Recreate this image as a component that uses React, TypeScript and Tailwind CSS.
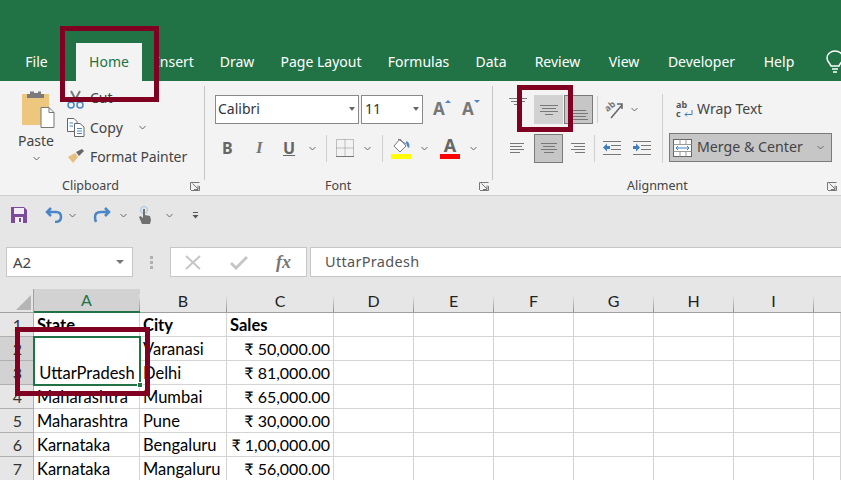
import type { ReactNode } from 'react';

const tabs = [
  { name: 'File', w: 'w-[53px]' },
  { name: 'Home', w: 'w-[66px] ml-[13px]', active: true },
  { name: 'Insert', w: 'w-[65px]' },
  { name: 'Draw', w: 'w-[60px]' },
  { name: 'Page Layout', w: 'w-[108px]' },
  { name: 'Formulas', w: 'w-[87px]' },
  { name: 'Data', w: 'w-[32px] ml-[13px]' },
  { name: 'Review', w: 'w-[101px]' },
  { name: 'View', w: 'w-[32px]' },
  { name: 'Developer', w: 'w-[123px]' },
  { name: 'Help', w: 'w-[32px]' },
];

const rows = [
  { n: 1, a: 'State', b: 'City', c: 'Sales', head: true },
  { n: 2, b: 'Varanasi', c: '₹ 50,000.00' },
  { n: 3, b: 'Delhi', c: '₹ 81,000.00' },
  { n: 4, a: 'Maharashtra', b: 'Mumbai', c: '₹ 65,000.00' },
  { n: 5, a: 'Maharashtra', b: 'Pune', c: '₹ 30,000.00' },
  { n: 6, a: 'Karnataka', b: 'Bengaluru', c: '₹ 1,00,000.00' },
  { n: 7, a: 'Karnataka', b: 'Mangaluru', c: '₹ 56,000.00' },
];

const emptyCols = ['D', 'E', 'F', 'G', 'H', 'I', ''];

function Chevron({ className = '' }: { className?: string }) {
  return (
    <svg width="7" height="5" viewBox="0 0 7 5" className={`shrink-0 ${className}`}>
      <path d="M.5 1 3.500 4 6.500 1" fill="none" stroke="#666" strokeWidth="1" />
    </svg>
  );
}

function Launcher() {
  return (
    <svg width="10" height="9" viewBox="0 0 10 9" className="shrink-0">
      <path d="M.5 8V.5H9.500M2.500 1.500 8 7M8 3.500V7.500H4M1 8.500H9.500V4" fill="none" stroke="#777" strokeWidth="1" />
    </svg>
  );
}

// horizontal text lines used by all the alignment buttons
function Lines({ lines }: { lines: [number, number, number][] }) {
  return (
    <svg width="20" height="18" viewBox="0 0 20 18" className="shrink-0">
      {lines.map(([x1, x2, y]) => (
        <path key={`${x1}-${y}`} d={`M${x1} ${y + 0.5}H${x2}`} stroke="#777" strokeWidth="1" />
      ))}
    </svg>
  );
}

function GroupLabel({ label, className }: { label: string; className: string }) {
  return (
    <div className={`flex h-[16px] items-center ${className}`}>
      <span className="text-[12.5px] text-[#444]">{label}</span>
    </div>
  );
}

function GroupDivider() {
  return <span className="h-[94px] w-px shrink-0 bg-[#c6c6c6]" />;
}

function ClipboardGroup() {
  return (
    <section className="flex w-[204px] shrink-0 flex-col">
      <div className="flex h-[92px]">
        <div className="ml-[18px] flex w-[36px] flex-col items-center">
          <svg width="36" height="40" viewBox="0 0 36 40" className="ml-[1px] mt-[3px] shrink-0">
            <rect x="3" y="5" width="27" height="31" fill="#eec77f" />
            <path d="M11 5V2.500H22V5H25V9H8V5Z" fill="#7a7a7a" />
            <rect x="15" y="1" width="4" height="3" fill="#f3f3f3" />
            <path d="M22 18.500H30L35 23.500V38.500H22Z" fill="#fff" stroke="#777" />
            <path d="M30 18.500V23.500H35" fill="none" stroke="#777" />
          </svg>
          <span className="mt-[2px] text-[14px] leading-[20px] text-[#444]">Paste</span>
          <Chevron className="mt-[5px]" />
        </div>
        <div className="-mt-[2px] ml-[13px] flex flex-col">
          <div className="flex h-[26px] items-center">
            <svg width="18" height="20" viewBox="0 0 18 20" className="mt-[5px] shrink-0">
              <path d="M4 1 10 12M13 1 7 12" stroke="#777" strokeWidth="2" fill="none" />
              <circle cx="4" cy="15" r="3" fill="none" stroke="#4a86c5" strokeWidth="1.500" />
              <circle cx="13" cy="15" r="3" fill="none" stroke="#4a86c5" strokeWidth="1.500" />
            </svg>
            <span className="ml-[5px] text-[14px] text-[#444]">Cut</span>
          </div>
          <div className="mt-[4px] flex h-[26px] items-center">
            <svg width="18" height="19" viewBox="0 0 18 19" className="shrink-0">
              <path d="M.5.500H7L10 3.500V13.500H.5Z" fill="#fff" stroke="#666" />
              <path d="M7.500 5.500H13L17 9V18.500H7.500Z" fill="#fff" stroke="#666" />
              <path d="M2.500 5H6M2.500 8H6M10 10.500H15M10 13H15M10 15.500H15" stroke="#4a86c5" />
            </svg>
            <span className="ml-[5px] w-[49px] text-[14px] text-[#444]">Copy</span>
            <Chevron />
          </div>
          <div className="mt-[3px] flex h-[26px] items-center">
            <svg width="18" height="16" viewBox="0 0 18 16" className="shrink-0">
              <path d="M1 9 8 5 11 9 6 15Z" fill="#e6bf7c" />
              <path d="M9 4 12 8 17 3 15 1Z" fill="#666" />
            </svg>
            <span className="ml-[5px] whitespace-nowrap text-[14px] tracking-[-0.1px] text-[#444]">Format Painter</span>
          </div>
        </div>
      </div>
      <div className="flex items-center">
        <GroupLabel label="Clipboard" className="ml-[62px] w-[128px]" />
        <Launcher />
      </div>
    </section>
  );
}

function FontGroup() {
  return (
    <section className="flex w-[287px] shrink-0 flex-col">
      <div className="ml-[10px] mt-[8px] flex h-[30px] items-center">
        <div className="flex h-[29px] w-[144px] items-center justify-between border border-[#8a8a8a] bg-white pb-[1px] pl-[2px] pr-[3px]">
          <span className="text-[14px] text-[#333]">Calibri</span>
          <span className="h-0 w-0 border-x-[3px] border-t-[4px] border-x-transparent border-t-[#666]" />
        </div>
        <div className="ml-[2px] flex h-[29px] w-[62px] items-center justify-between border border-[#8a8a8a] bg-white pb-[1px] pl-[3px] pr-[3px]">
          <span className="text-[14px] text-[#333]">11</span>
          <span className="h-0 w-0 border-x-[3px] border-t-[4px] border-x-transparent border-t-[#666]" />
        </div>
        <span className="ml-[10px] flex w-[29px] items-start text-[17px] font-bold leading-[24px] text-[#777]">
          A<span className="mt-[3px] h-0 w-0 border-x-[3px] border-b-[3px] border-x-transparent border-b-[#4a86c5]" />
        </span>
        <span className="flex items-start text-[17px] font-bold leading-[24px] text-[#777]">
          A<span className="mt-[3px] h-0 w-0 border-x-[3px] border-t-[3px] border-x-transparent border-t-[#4a86c5]" />
        </span>
      </div>
      <div className="ml-[17px] mt-[10px] flex h-[28px] items-center">
        <span className="w-[34px] text-[16px] font-bold text-[#666]">B</span>
        <span className="w-[27px] font-['Liberation_Serif'] text-[17px] font-bold italic text-[#777]">I</span>
        <span className="w-[21px] text-[16px] font-bold text-[#666] underline">U</span>
        <Chevron className="ml-[5px] mr-[10px]" />
        <span className="mr-[9px] h-[27px] w-px bg-[#d0d0d0]" />
        <svg width="18" height="18" viewBox="0 0 18 18" className="shrink-0">
          <path d="M.5.500H17.500V17.500H.5ZM9 .5V17.500M.5 9H17.500" fill="none" stroke="#888" strokeDasharray="1 1" />
          <path d="M0 17.500H18" stroke="#777" />
        </svg>
        <Chevron className="ml-[10px] mr-[11px]" />
        <span className="mr-[8px] h-[27px] w-px bg-[#d0d0d0]" />
        <div className="flex w-[20px] flex-col items-center">
          <svg width="20" height="15" viewBox="0 0 20 15" className="shrink-0">
            <path d="M9 1 3 8 9 14 15 8Z" fill="#fff" stroke="#777" />
            <path d="M7 1 15 6" stroke="#777" />
            <path d="M15 3C18 4 19 7 18 10 16 9 15 6 15 3Z" fill="#4a86c5" />
          </svg>
          <span className="mt-[1px] h-[5px] w-[20px] bg-[#ffff00]" />
        </div>
        <Chevron className="ml-[10px] mr-[12px]" />
        <div className="flex w-[20px] flex-col items-center">
          <span className="h-[15px] text-[18px] font-bold leading-[15px] text-[#666]">A</span>
          <span className="mt-[1px] h-[5px] w-[20px] bg-[#ff0000]" />
        </div>
        <Chevron className="ml-[10px]" />
      </div>
      <div className="mt-[16px] flex items-center">
        <GroupLabel label="Font" className="ml-[120px] w-[154px]" />
        <Launcher />
      </div>
    </section>
  );
}

function AlignmentGroup() {
  return (
    <section className="flex flex-1 flex-col">
      <div className="flex h-[92px]">
        <div className="ml-[15px] mt-[8px] flex flex-col">
          <div className="flex h-[30px] items-center">
            <span className="mb-[9px] w-[26px]">
              <Lines lines={[[1, 19, 2], [3, 17, 5], [6, 14, 8]]} />
            </span>
            <span className="flex h-[29px] w-[29px] items-center justify-center bg-[#d2d2d2]">
              <Lines lines={[[1, 19, 5], [3, 17, 8], [1, 19, 11], [6, 14, 14]]} />
            </span>
            <span className="ml-[1px] flex h-[29px] w-[29px] items-end justify-center border border-[#7a7a7a] bg-[#c6c6c6]">
              <Lines lines={[[3, 17, 5], [1, 19, 8], [3, 17, 11], [1, 19, 14]]} />
            </span>
            <span className="ml-[4px] mr-[6px] h-[27px] w-px bg-[#d0d0d0]" />
            <svg width="20" height="20" viewBox="0 0 20 20" className="shrink-0 overflow-visible">
              <path d="M7 19 18 6M13 5H18V10" fill="none" stroke="#666" strokeWidth="1.500" />
              <text x="2" y="11" fontSize="9" fontWeight="700" fill="#777" transform="rotate(-40 6 10)">ab</text>
            </svg>
            <Chevron className="ml-[7px]" />
          </div>
          <div className="mt-[9px] flex h-[30px] items-center">
            <span className="w-[26px]">
              <Lines lines={[[2, 16, 4], [2, 14, 7], [2, 16, 10], [2, 12, 13]]} />
            </span>
            <span className="flex h-[29px] w-[29px] items-center justify-center border border-[#7a7a7a] bg-[#c6c6c6]">
              <Lines lines={[[2, 18, 4], [4, 16, 7], [2, 18, 10], [5, 15, 13]]} />
            </span>
            <span className="ml-[5px] w-[25px]">
              <Lines lines={[[3, 17, 4], [6, 17, 7], [3, 17, 10], [7, 17, 13]]} />
            </span>
            <span className="ml-[1px] mr-[7px] h-[27px] w-px bg-[#d0d0d0]" />
            <svg width="20" height="16" viewBox="0 0 20 16" className="shrink-0">
              <path d="M1 1.500H19M9 5.500H19M9 9.500H19M1 14.500H19" stroke="#777" />
              <path d="M1 7.500 5 3.500V6H8V9H5V11.500Z" fill="#3f7fbf" />
            </svg>
            <svg width="20" height="16" viewBox="0 0 20 16" className="ml-[10px] shrink-0">
              <path d="M1 1.500H19M9 5.500H19M9 9.500H19M1 14.500H19" stroke="#777" />
              <path d="M8 7.500 4 3.500V6H1V9H4V11.500Z" fill="#3f7fbf" />
            </svg>
          </div>
        </div>
        <span className="ml-[10px] mt-[8px] h-[69px] w-px bg-[#d0d0d0]" />
        <div className="ml-[6px] mt-[8px] flex flex-col">
          <div className="flex h-[30px] items-center pb-[1px] pl-[7px]">
            <div className="flex h-[18px] w-[17px] shrink-0 flex-col text-[9px] font-bold leading-[9px] text-[#555]">
              <span>ab</span>
              <span className="flex items-end justify-between">
                c
                <svg width="9" height="8" viewBox="0 0 9 8" className="shrink-0">
                  <path d="M8 0V4.500H1M3 2.500 1 4.500 3 6.500" fill="none" stroke="#3f7fbf" />
                </svg>
              </span>
            </div>
            <span className="ml-[4px] text-[14px] text-[#444]">Wrap Text</span>
          </div>
          <div className="mt-[9px] flex h-[29px] w-[163px] items-center border border-[#7a7a7a] bg-[#c6c6c6] pl-[3px]">
            <svg width="19" height="18" viewBox="0 0 19 18" className="shrink-0">
              <rect x=".5" y=".5" width="18" height="17" fill="#fff" stroke="#666" />
              <path d="M.5 5.500H18.500M.5 12.500H18.500M7 .5V5M13 .5V5M7 13V17.500M13 13V17.500" stroke="#999" />
              <path d="M3 9H16M5 7 3 9 5 11M14 7 16 9 14 11" fill="none" stroke="#3f7fbf" />
            </svg>
            <span className="ml-[5px] w-[120px] whitespace-nowrap pb-[1px] text-[14.200px] text-[#444]">Merge &amp; Center</span>
            <Chevron />
          </div>
        </div>
      </div>
      <div className="flex items-center">
        <GroupLabel label="Alignment" className="ml-[134px] w-[200px]" />
        <Launcher />
      </div>
    </section>
  );
}

function QuickAccess() {
  return (
    <div className="flex h-[39px] items-center pb-[1px] pl-[11px]">
      <svg width="16" height="16" viewBox="0 0 16 16" className="shrink-0">
        <path d="M0 0H13L16 3V16H0Z" fill="#7d4b9e" />
        <rect x="3" y="1" width="10" height="6" fill="#f1edf4" />
        <rect x="4" y="10" width="8" height="6" fill="#f1edf4" />
        <rect x="8" y="11" width="2" height="4" fill="#7d4b9e" />
      </svg>
      <svg width="18" height="16" viewBox="0 0 18 16" className="ml-[18px] shrink-0">
        <path d="M6 1 2 5 6 9M2 5H11C15 5 16 8 16 10 16 13 14 15 10 15" fill="none" stroke="#4a86c5" strokeWidth="2.500" />
      </svg>
      <Chevron className="ml-[6px]" />
      <svg width="18" height="16" viewBox="0 0 18 16" className="ml-[17px] shrink-0">
        <path d="M12 1 16 5 12 9M16 5H8C3 5 2 8 2 10 2 12 2 13 3 15" fill="none" stroke="#4a86c5" strokeWidth="2.500" />
      </svg>
      <Chevron className="ml-[9px]" />
      <svg width="14" height="18" viewBox="0 0 14 18" className="ml-[11px] shrink-0">
        <circle cx="6" cy="4" r="3.500" fill="none" stroke="#9cc3e6" />
        <path d="M5 3H7V9L12 10 13 14 12 18H4L1 11 2.500 10 5 12Z" fill="#707070" />
      </svg>
      <Chevron className="ml-[14px]" />
      <svg width="7" height="8" viewBox="0 0 7 8" className="ml-[19px] shrink-0">
        <path d="M1 1.500H6" stroke="#555" />
        <path d="M.5 4H6.500L3.500 7.500Z" fill="#555" />
      </svg>
    </div>
  );
}

function FormulaBar() {
  return (
    <div className="flex h-[54px] items-start pt-[12px]">
      <div className="ml-[6px] flex h-[30px] w-[127px] items-center justify-between border border-[#c6c6c6] bg-white pl-[6px] pr-[8px]">
        <span className="text-[15px] text-[#444]">A2</span>
        <span className="h-0 w-0 border-x-[4px] border-t-[4px] border-x-transparent border-t-[#777]" />
      </div>
      <div className="ml-[17px] mr-[17px] flex h-[30px] w-[3px] flex-col items-center justify-center gap-[2px]">
        <span className="h-[3px] w-[3px] bg-[#b0b0b0]" />
        <span className="h-[3px] w-[3px] bg-[#b0b0b0]" />
        <span className="h-[3px] w-[3px] bg-[#b0b0b0]" />
      </div>
      <div className="flex h-[30px] w-[137px] items-center border border-[#c6c6c6] bg-white pl-[14px]">
        <svg width="16" height="15" viewBox="0 0 16 15" className="shrink-0">
          <path d="M1 1 15 14M15 1 1 14" stroke="#c6c6c6" strokeWidth="2" />
        </svg>
        <svg width="18" height="15" viewBox="0 0 18 15" className="ml-[29px] shrink-0">
          <path d="M1 8 6 13 17 2" fill="none" stroke="#c6c6c6" strokeWidth="3" />
        </svg>
        <span className="ml-[28px] font-['Liberation_Serif'] text-[18px] font-bold italic text-[#777]">fx</span>
      </div>
      <div className="ml-[3px] flex h-[30px] flex-1 items-center border border-r-0 border-[#c6c6c6] bg-white pl-[14px]">
        <span className="text-[14.500px] tracking-[0.3px] text-[#555]">UttarPradesh</span>
      </div>
    </div>
  );
}

function ColumnHead({ label, selected }: { label: string; selected?: boolean }) {
  return (
    <div className={`flex ${selected ? 'border-b-2 border-[#217346] bg-[#d2d2d2]' : 'border-b border-[#a0a0a0]'}`}>
      <span className={`flex flex-1 items-center justify-center text-[16px] ${selected ? 'text-[#217346]' : 'text-[#222]'}`}>{label}</span>
      {label && <span className="mt-[6px] w-px bg-gradient-to-b from-[#e6e6e6] to-[#909090]" />}
    </div>
  );
}

function Cell({ children, className = '' }: { children?: ReactNode; className?: string }) {
  return (
    <div className={`flex items-center overflow-hidden whitespace-nowrap border-b border-r border-[#d4d4d4] bg-white px-[3px] pt-[1px] text-[16.500px] text-black ${className}`}>
      {children}
    </div>
  );
}

function Sheet() {
  return (
    <div className="grid grid-cols-[34px_106px_87px_107px_80px_80px_80px_80px_80px_80px_1fr] grid-rows-[24px_repeat(7,24px)] font-['Lato',sans-serif]">
      <div className="flex items-end justify-end border-b border-r border-[#a0a0a0] pb-[2px] pr-[2px]">
        <span className="h-0 w-0 border-b-[15px] border-l-[15px] border-b-[#b5b5b5] border-l-transparent" />
      </div>
      <ColumnHead label="A" selected />
      {['B', 'C', ...emptyCols].map((col) => (
        <ColumnHead key={col} label={col} />
      ))}
      {rows.map((row) => (
        <div key={row.n} className="contents">
          <div className={`flex items-center justify-center border-b border-r border-[#b0b0b0] pl-[2px] pt-[1px] text-[16px] text-[#333] ${row.n === 2 || row.n === 3 ? 'bg-[#d2d2d2]' : ''}`}>
            {row.n}
          </div>
          {row.n === 2 && (
            <div className="relative row-span-2 flex items-end justify-center bg-white text-[16.500px] leading-[23px] text-black">
              <span className="relative z-10">UttarPradesh</span>
              <span className="absolute -inset-px border-2 border-[#217346]" />
              <span className="absolute -bottom-[3px] -right-[3px] h-[6px] w-[6px] border border-white bg-[#217346]" />
            </div>
          )}
          {row.n !== 2 && row.n !== 3 && <Cell className={row.head ? 'font-bold' : ''}>{row.a}</Cell>}
          <Cell className={row.head ? 'font-bold' : ''}>{row.b}</Cell>
          <Cell className={row.head ? 'font-bold' : 'justify-end text-[16px]'}>{row.c}</Cell>
          {emptyCols.map((col) => (
            <Cell key={col} />
          ))}
        </div>
      ))}
    </div>
  );
}

export default function App() {
  return (
    <div className="relative h-[480px] w-[841px] overflow-hidden bg-[#e6e6e6] font-['Noto_Sans',sans-serif]">
      <div className="h-[43px] bg-[#217346]" />
      <nav className="flex h-[38px] items-center bg-[#217346] pl-[10px]">
        {tabs.map((tab) => (
          <div
            key={tab.name}
            className={`flex h-full shrink-0 items-center justify-center whitespace-nowrap pb-[2px] text-[14px] ${tab.w} ${tab.active ? 'bg-[#f3f3f3] text-[#217346]' : 'text-white'}`}
          >
            {tab.name}
          </div>
        ))}
        <svg width="18" height="24" viewBox="0 0 18 24" className="ml-[31px] shrink-0">
          <path d="M5 16C4 13 1 12 1 8A8 7 0 0 1 17 8C17 12 14 13 13 16ZM6 19H12M7 22H11" fill="none" stroke="#fff" strokeWidth="1.500" />
        </svg>
      </nav>
      <div className="flex h-[114px] bg-[#f3f3f3] pt-[5px]">
        <ClipboardGroup />
        <GroupDivider />
        <FontGroup />
        <GroupDivider />
        <AlignmentGroup />
      </div>
      <div className="h-px bg-[#d0d0d0]" />
      <QuickAccess />
      <FormulaBar />
      <Sheet />

      {/* red highlight boxes drawn over the screenshot */}
      <div className="absolute left-[60px] top-[26px] h-[76px] w-[99px] border-[5px] border-[#7f0020]" />
      <div className="absolute left-[517px] top-[85px] h-[47px] w-[56px] border-[5px] border-[#7f0020]" />
      <div className="absolute left-[15px] top-[327px] h-[69px] w-[135px] border-[5px] border-[#7f0020]" />
    </div>
  );
}
